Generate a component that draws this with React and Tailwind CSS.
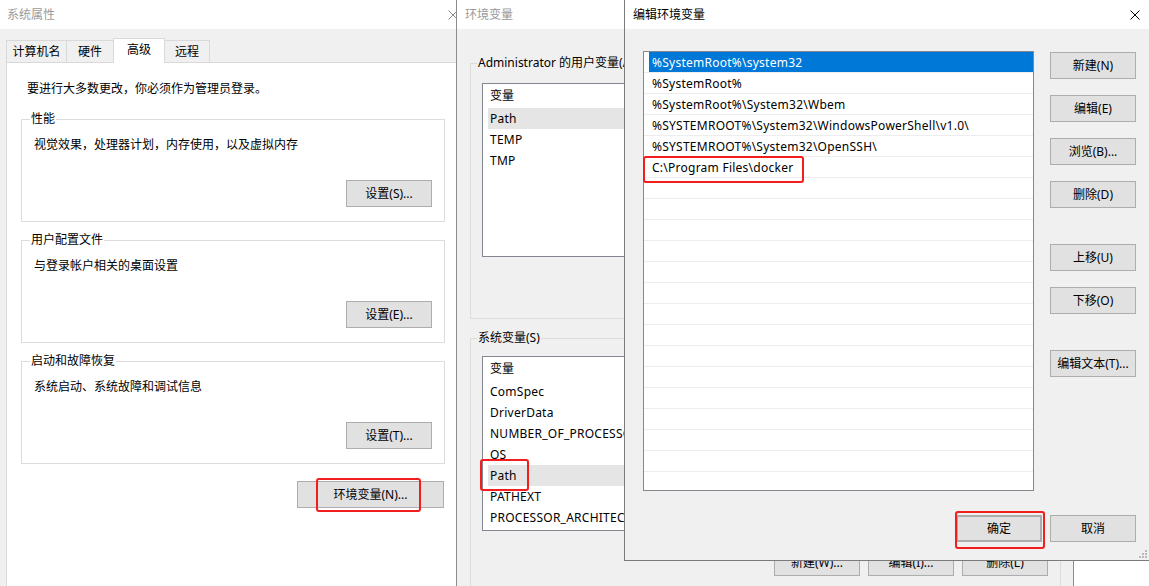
import React from 'react';

const font = "font-['Noto_Sans','Noto_Sans_CJK_SC',sans-serif]";

const Btn = ({ children, className = '' }) => (
  <div className={`relative flex h-[27px] w-[86px] shrink-0 items-center justify-center border border-[#adadad] bg-[#e1e1e1] text-black ${className}`}>
    {children}
  </div>
);

// red annotation frame drawn over the screenshot
const RedMark = ({ className = '' }) => (
  <div className={`pointer-events-none absolute z-20 rounded-[3px] border-2 border-[#f21d1d] ${className}`} />
);

const CloseX = ({ color }) => (
  <svg width="10" height="10" viewBox="0 0 10 10">
    <path d="M0.5 0.5L9.5 9.5M9.5 0.5L0.5 9.5" stroke={color} strokeWidth="1" fill="none" />
  </svg>
);

const Group = ({ label, text, btn, className = '' }) => (
  <fieldset className={`ml-[14px] w-[424px] border border-[#dcdcdc] ${className}`}>
    <legend className="ml-[8px] px-px leading-[16px]">{label}</legend>
    <p className="ml-[12px] mt-[10px]">{text}</p>
    <div className="mb-[14px] mr-[12px] mt-[27px] flex justify-end">
      <Btn>{btn}</Btn>
    </div>
  </fieldset>
);

const VarList = ({ items, className = '' }) => (
  <div className={`flex w-[566px] flex-col border border-[#828790] bg-white ${className}`}>
    <div className="flex h-[24px] shrink-0 items-center pl-[7px]">变量</div>
    {items.map((it) => (
      <div
        key={it.name}
        className={`relative ml-[5px] flex h-[21px] shrink-0 items-center pl-[2px] tracking-[0.25px] ${it.hl ? 'bg-[#e5e5e5]' : ''}`}
      >
        {it.name}
        {it.mark && <RedMark className="-left-[8px] -top-[6px] h-[32px] w-[49px]" />}
      </div>
    ))}
  </div>
);

const userVars = [{ name: 'Path', hl: true }, { name: 'TEMP' }, { name: 'TMP' }];
const sysVars = [
  { name: 'ComSpec' },
  { name: 'DriverData' },
  { name: 'NUMBER_OF_PROCESSORS' },
  { name: 'OS' },
  { name: 'Path', hl: true, mark: true },
  { name: 'PATHEXT' },
  { name: 'PROCESSOR_ARCHITECTURE' },
];

const paths = [
  '%SystemRoot%\\system32',
  '%SystemRoot%',
  '%SystemRoot%\\System32\\Wbem',
  '%SYSTEMROOT%\\System32\\WindowsPowerShell\\v1.0\\',
  '%SYSTEMROOT%\\System32\\OpenSSH\\',
  'C:\\Program Files\\docker',
];

export default function App() {
  const rows = Array.from({ length: 20 }, (_, i) => paths[i] || '');

  return (
    <div className={`relative h-[586px] w-[1149px] overflow-hidden bg-white text-[12px] leading-[16px] text-black ${font}`}>
      {/* 系统属性 */}
      <div className="absolute left-0 top-0 flex h-[600px] w-[472px] flex-col bg-[#f0f0f0]">
        <div className="flex h-[29px] shrink-0 items-center justify-between bg-white pl-[7px] pr-[14px] text-[#9a9a9a]">
          <span>系统属性</span>
          <CloseX color="#8a8a8a" />
        </div>
        <div className="ml-[6px] mt-[9px] flex h-[24px] shrink-0 items-end">
          <div className="flex h-[22px] w-[61px] items-center justify-center border border-b-0 border-[#d9d9d9] bg-[#f0f0f0]">计算机名</div>
          <div className="-ml-px flex h-[22px] w-[48px] items-center justify-center border border-b-0 border-[#d9d9d9] bg-[#f0f0f0]">硬件</div>
          <div className="relative z-10 -mb-px -ml-px flex h-[25px] w-[52px] items-center justify-center border border-b-0 border-[#d9d9d9] bg-white pb-[2px]">高级</div>
          <div className="-ml-px flex h-[22px] w-[46px] items-center justify-center border border-b-0 border-[#d9d9d9] bg-[#f0f0f0]">远程</div>
        </div>
        <div className="ml-[6px] flex-1 border border-[#d9d9d9] bg-white">
          <p className="ml-[20px] mt-[18px]">要进行大多数更改，你必须作为管理员登录。</p>
          <Group className="mt-[14px]" label="性能" text="视觉效果，处理器计划，内存使用，以及虚拟内存" btn="设置(S)..." />
          <Group className="mt-[10px]" label="用户配置文件" text="与登录帐户相关的桌面设置" btn="设置(E)..." />
          <Group className="mt-[10px]" label="启动和故障恢复" text="系统启动、系统故障和调试信息" btn="设置(T)..." />
          <div className="ml-[290px] mt-[17px] flex">
            <Btn className="w-[147px]">
              环境变量(N)...
              <RedMark className="left-[18px] -top-[4px] h-[34px] w-[105px]" />
            </Btn>
          </div>
        </div>
      </div>

      {/* 环境变量 */}
      <div className="absolute left-[456px] top-0 flex h-[600px] w-[618px] flex-col border-x border-[#8c8c8c] bg-[#f0f0f0]">
        <div className="flex h-[29px] shrink-0 items-center bg-white pl-[8px] text-[#9a9a9a]">环境变量</div>
        <fieldset className="ml-[13px] mt-[26px] w-[591px] border border-[#dcdcdc] pb-[61px]">
          <legend className="ml-[6px] px-px leading-[16px]">Administrator 的用户变量(A)</legend>
          <VarList items={userVars} className="ml-[11px] mt-[12px] h-[174px]" />
        </fieldset>
        <fieldset className="ml-[13px] mt-[11px] w-[591px] border border-[#dcdcdc] pb-[20px]">
          <legend className="ml-[6px] px-px leading-[16px]">系统变量(S)</legend>
          <VarList items={sysVars} className="ml-[11px] mt-[10px] h-[175px]" />
          <div className="ml-[11px] mt-[18px] flex w-[566px] justify-end gap-[8px]">
            <Btn>新建(W)...</Btn>
            <Btn>编辑(I)...</Btn>
            <Btn>删除(L)</Btn>
          </div>
        </fieldset>
      </div>

      {/* 编辑环境变量 */}
      <div className="absolute left-[624px] top-0 flex h-[561px] w-[525px] flex-col border-b border-l border-[#7b7b7b] bg-[#f0f0f0]">
        <div className="flex h-[29px] shrink-0 items-center justify-between bg-white pl-[8px] pr-[9px]">
          <span>编辑环境变量</span>
          <CloseX color="#000" />
        </div>
        <div className="flex">
          <div className="ml-[18px] mt-[22px] flex h-[440px] w-[391px] flex-col border border-[#828790] bg-white tracking-[0.25px]">
            {rows.map((p, i) => (
              <div key={i} className="relative h-[21px] shrink-0 border-b border-[#ededed]">
                {i === 0 ? (
                  <div className="ml-[5px] flex h-full items-center bg-[#0078d7] pl-[3px] pt-px text-white">{p}</div>
                ) : (
                  <div className="flex h-full items-center pl-[8px] pt-px">{p}</div>
                )}
                {i === 5 && <RedMark className="-left-px -top-px h-[27px] w-[161px]" />}
              </div>
            ))}
          </div>
          <div className="ml-[16px] mt-[23px] flex flex-col">
            <Btn>新建(N)</Btn>
            <Btn className="mt-[16px]">编辑(E)</Btn>
            <Btn className="mt-[16px]">浏览(B)...</Btn>
            <Btn className="mt-[16px]">删除(D)</Btn>
            <Btn className="mt-[36px]">上移(U)</Btn>
            <Btn className="mt-[16px]">下移(O)</Btn>
            <Btn className="mt-[36px]">编辑文本(T)...</Btn>
          </div>
        </div>
        <div className="mt-[24px] flex justify-end gap-[8px] pr-[13px]">
          <Btn className="border-2 border-[#0078d7]">
            确定
            <RedMark className="-left-[3px] -top-[6px] h-[38px] w-[90px]" />
          </Btn>
          <Btn>取消</Btn>
        </div>
        <svg className="absolute bottom-[2px] right-[2px]" width="8" height="8" viewBox="0 0 8 8">
          <g fill="#b8b8b8">
            <rect x="6" y="0" width="2" height="2" />
            <rect x="3" y="3" width="2" height="2" />
            <rect x="6" y="3" width="2" height="2" />
            <rect x="0" y="6" width="2" height="2" />
            <rect x="3" y="6" width="2" height="2" />
            <rect x="6" y="6" width="2" height="2" />
          </g>
        </svg>
      </div>
    </div>
  );
}
